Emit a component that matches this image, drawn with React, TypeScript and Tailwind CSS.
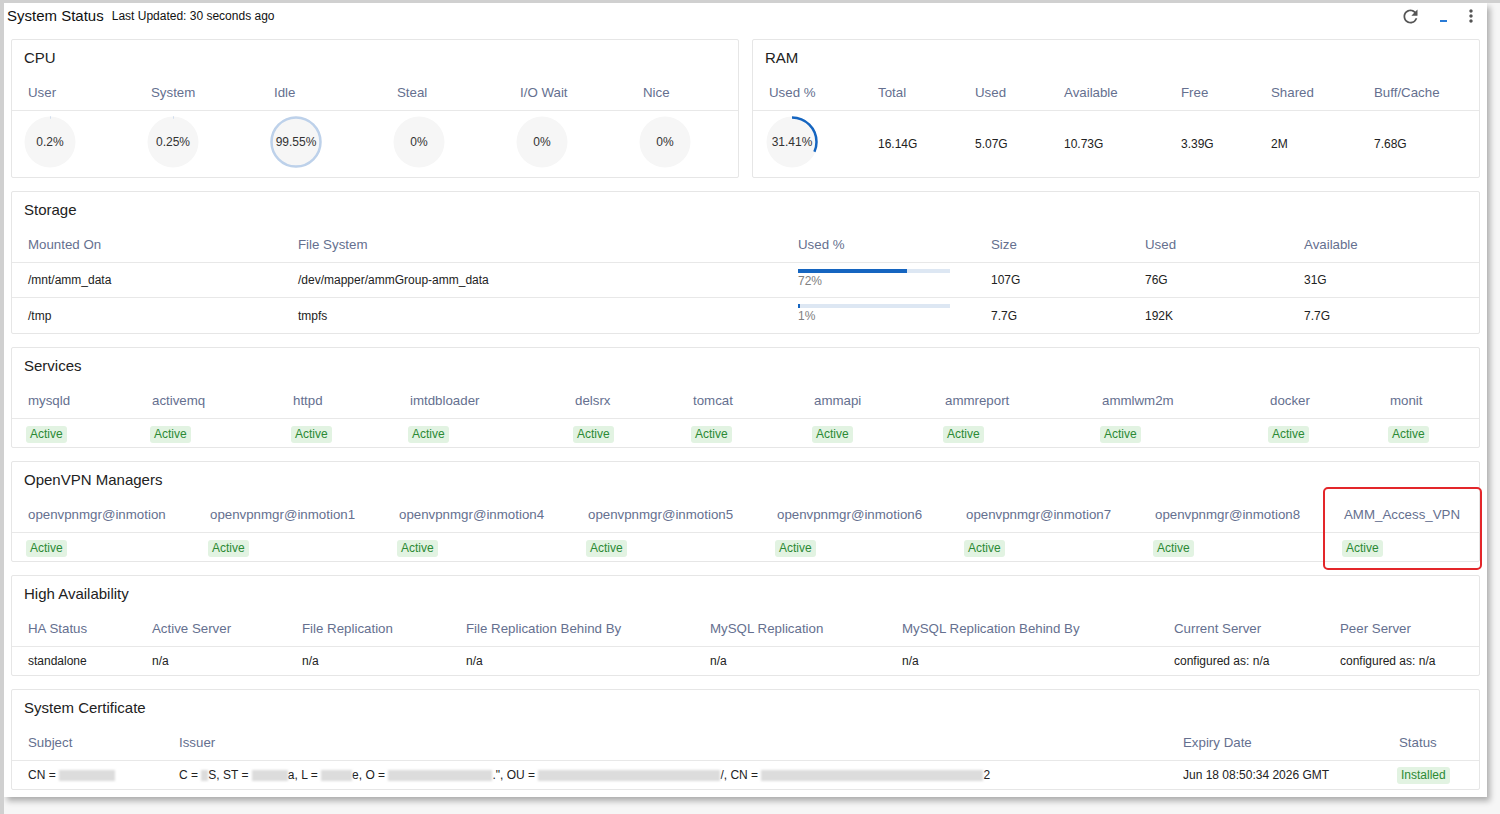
import React from 'react';
import { MdRefresh, MdMoreVert } from 'react-icons/md';

const Ring = ({ pct, label, color }: { pct: number; label: string; color: string }) => {
  const r = 24.5;
  const c = 2 * Math.PI * r;
  return (
    <div className="relative w-[52px] h-[52px]">
      <svg width="52" height="52" viewBox="0 0 52 52" className="absolute inset-0 -rotate-90">
        <circle cx="26" cy="26" r="25.5" fill="#f6f6f6" />
        {pct > 0 && (
          <circle
            cx="26"
            cy="26"
            r={r}
            fill="none"
            stroke={color}
            strokeWidth="2.5"
            strokeDasharray={`${Math.max((c * pct) / 100, 0.7)} ${c}`}
          />
        )}
      </svg>
      <div className="absolute inset-0 flex items-center justify-center text-[12px] text-[#333]">{label}</div>
    </div>
  );
};

const Badge = ({ children }: { children: React.ReactNode }) => (
  <span className="inline-block h-[17px] px-[4px] rounded-[3px] bg-[#e2f3e2] text-[#2b8a34] text-[12px] leading-[17px]">
    {children}
  </span>
);

const Card = ({ title, children }: { title: string; children: React.ReactNode }) => (
  <div className="relative border border-[#e6e6e6] rounded-[2px] bg-white">
    <div className="h-[36px] px-[12px] pt-[8px] text-[15px] leading-[20px] text-[#222]">{title}</div>
    {children}
  </div>
);

const Head = ({ cols, labels }: { cols: string; labels: string[] }) => (
  <div className={`grid ${cols} h-[35px] items-center border-b border-[#e8e8e8]`}>
    {labels.map((l) => (
      <div key={l} className="pl-4 text-[13.3px] text-[#65708f] whitespace-nowrap">
        {l}
      </div>
    ))}
  </div>
);

const Blur = ({ w }: { w: string }) => (
  <span className={`inline-block ${w} h-[11px] bg-[#dcdcdc] blur-[1.2px] align-middle`} />
);

const cpu = [
  ['User', 0.2, '0.2%'],
  ['System', 0.25, '0.25%'],
  ['Idle', 99.55, '99.55%'],
  ['Steal', 0, '0%'],
  ['I/O Wait', 0, '0%'],
  ['Nice', 0, '0%'],
] as const;

const services = ['mysqld', 'activemq', 'httpd', 'imtdbloader', 'delsrx', 'tomcat', 'ammapi', 'ammreport', 'ammlwm2m', 'docker', 'monit'];

const vpns = [
  'openvpnmgr@inmotion',
  'openvpnmgr@inmotion1',
  'openvpnmgr@inmotion4',
  'openvpnmgr@inmotion5',
  'openvpnmgr@inmotion6',
  'openvpnmgr@inmotion7',
  'openvpnmgr@inmotion8',
  'AMM_Access_VPN',
];

export default function App() {
  return (
    <div className="w-[1500px] h-[814px] overflow-hidden bg-[#f6f6f6] border-l-[4px] border-t-[3px] border-[#d0d0d0] font-['Liberation_Sans',Arial,sans-serif]">
      <div className="w-[1483px] bg-white pb-[7px] shadow-[3px_4px_6px_rgba(0,0,0,0.3)]">
        {/* header */}
        <div className="h-[26px] flex items-center pl-[3px] pr-[6px]">
          <span className="text-[15px] text-[#111]">System Status</span>
          <span className="ml-[8px] text-[12px] text-[#111]">Last Updated: 30 seconds ago</span>
          <div className="ml-auto flex items-center">
            <MdRefresh size={21} className="text-[#555]" />
            <span className="ml-[19px] mt-[9px] w-[7px] h-[2px] bg-[#2a7bd6]" />
            <MdMoreVert size={20} className="ml-[14px] text-[#555]" />
          </div>
        </div>

        <div className="mt-[10px] px-[7px] flex flex-col gap-[13px]">
          <div className="grid grid-cols-2 gap-[13px]">
            <Card title="CPU">
              <Head cols="grid-cols-[123px_123px_123px_123px_123px_1fr]" labels={cpu.map((c) => c[0])} />
              <div className="grid grid-cols-[123px_123px_123px_123px_123px_1fr] pt-[5px] pb-[9px]">
                {cpu.map((c) => (
                  <div key={c[0]} className="pl-3">
                    <Ring pct={c[1]} label={c[2]} color="#bdd1ea" />
                  </div>
                ))}
              </div>
            </Card>
            <Card title="RAM">
              <Head
                cols="grid-cols-[109px_97px_89px_117px_90px_103px_1fr]"
                labels={['Used %', 'Total', 'Used', 'Available', 'Free', 'Shared', 'Buff/Cache']}
              />
              <div className="grid grid-cols-[109px_97px_89px_117px_90px_103px_1fr] items-center h-[66px] text-[12px] text-[#222]">
                <div className="pl-[13px] -mt-[5px]">
                  <Ring pct={31.41} label="31.41%" color="#1565c0" />
                </div>
                {['16.14G', '5.07G', '10.73G', '3.39G', '2M', '7.68G'].map((v) => (
                  <div key={v} className="pl-4">
                    {v}
                  </div>
                ))}
              </div>
            </Card>
          </div>

          <Card title="Storage">
            <Head
              cols="grid-cols-[270px_500px_193px_154px_159px_1fr]"
              labels={['Mounted On', 'File System', 'Used %', 'Size', 'Used', 'Available']}
            />
            {[
              ['/mnt/amm_data', '/dev/mapper/ammGroup-amm_data', 72, '107G', '76G', '31G'],
              ['/tmp', 'tmpfs', 1, '7.7G', '192K', '7.7G'],
            ].map((r, i) => (
              <div
                key={i}
                className={`grid grid-cols-[270px_500px_193px_154px_159px_1fr] items-center h-[35px] text-[12px] text-[#222] ${
                  i === 0 ? 'border-b border-[#e8e8e8]' : ''
                }`}
              >
                <div className="pl-4">{r[0]}</div>
                <div className="pl-4">{r[1]}</div>
                <div className="pl-4 self-start pt-[6px]">
                  <div className="w-[152px] h-[4px] bg-[#dde7f3]">
                    <div className="h-full bg-[#1565c0]" style={{ width: `${r[2]}%` }} />
                  </div>
                  <div className="mt-[1px] leading-[14px] text-[#808080]">{r[2]}%</div>
                </div>
                <div className="pl-4">{r[3]}</div>
                <div className="pl-4">{r[4]}</div>
                <div className="pl-4">{r[5]}</div>
              </div>
            ))}
          </Card>

          <Card title="Services">
            <Head cols="grid-cols-[124px_141px_117px_165px_118px_121px_131px_157px_168px_120px_1fr]" labels={services} />
            <div className="grid grid-cols-[124px_141px_117px_165px_118px_121px_131px_157px_168px_120px_1fr] items-center h-[28px]">
              {services.map((s) => (
                <div key={s} className="pl-[14px]">
                  <Badge>Active</Badge>
                </div>
              ))}
            </div>
          </Card>

          <Card title="OpenVPN Managers">
            <Head cols="grid-cols-[182px_189px_189px_189px_189px_189px_189px_1fr]" labels={vpns} />
            <div className="grid grid-cols-[182px_189px_189px_189px_189px_189px_189px_1fr] items-center h-[28px]">
              {vpns.map((s) => (
                <div key={s} className="pl-[14px]">
                  <Badge>Active</Badge>
                </div>
              ))}
            </div>
            <div className="absolute left-[1311px] top-[25px] w-[159px] h-[83px] border-2 border-[#e3262a] rounded-[5px] z-10" />
          </Card>

          <Card title="High Availability">
            <Head
              cols="grid-cols-[124px_150px_164px_244px_192px_272px_166px_1fr]"
              labels={[
                'HA Status',
                'Active Server',
                'File Replication',
                'File Replication Behind By',
                'MySQL Replication',
                'MySQL Replication Behind By',
                'Current Server',
                'Peer Server',
              ]}
            />
            <div className="grid grid-cols-[124px_150px_164px_244px_192px_272px_166px_1fr] items-center h-[28px] text-[12px] text-[#222]">
              {['standalone', 'n/a', 'n/a', 'n/a', 'n/a', 'n/a', 'configured as: n/a', 'configured as: n/a'].map((v, i) => (
                <div key={i} className="pl-4 whitespace-nowrap">
                  {v}
                </div>
              ))}
            </div>
          </Card>

          <Card title="System Certificate">
            <Head cols="grid-cols-[151px_1004px_216px_1fr]" labels={['Subject', 'Issuer', 'Expiry Date', 'Status']} />
            <div className="grid grid-cols-[151px_1004px_216px_1fr] items-center h-[28px] text-[12px] text-[#222]">
              <div className="pl-4 whitespace-nowrap">
                CN = <Blur w="w-[56px]" />
              </div>
              <div className="pl-4 whitespace-nowrap">
                C = <Blur w="w-[7px]" />S, ST = <Blur w="w-[36px]" />a, L = <Blur w="w-[31px]" />e, O ={' '}
                <Blur w="w-[104px]" />
                .", OU = <Blur w="w-[182px]" />
                /, CN = <Blur w="w-[222px]" />2
              </div>
              <div className="pl-4 whitespace-nowrap">Jun 18 08:50:34 2026 GMT</div>
              <div className="pl-[14px]">
                <Badge>Installed</Badge>
              </div>
            </div>
          </Card>
        </div>
      </div>
    </div>
  );
}
